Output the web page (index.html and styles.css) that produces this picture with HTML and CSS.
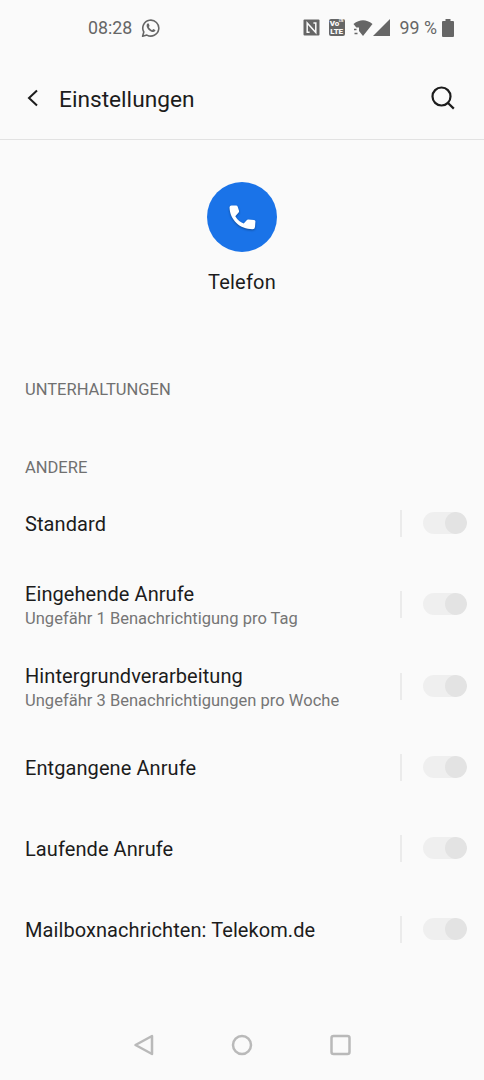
FILE: index.html
```html
<!DOCTYPE html>
<html lang="de">
  <head>
    <meta charset="UTF-8" />
    <meta name="viewport" content="width=device-width, initial-scale=1.0" />
    <title>Einstellungen</title>
    <link rel="stylesheet" href="styles.css">
  </head>
  <body>
    <div class="status-bar">
      <span class="time">08:28</span>
      <svg class="whatsapp" width="20" height="20" viewBox="0 0 20 20">
        <path d="M1.6 18.3l1.2-4.3a8 8 0 1 1 3.1 3.1z" fill="none" stroke="#666" stroke-width="1.6" stroke-linejoin="round" />
        <path d="M7.1 5.3c-.4 0-1.5.7-1.5 2.1 0 3 3.6 6.6 6.6 6.6 1.4 0 2.3-1 2.2-1.9l-2.2-1.1-1.1 1.2c-1.5-.6-2.6-1.7-3.3-3.1l.8-1-.8-2.4z" fill="#666" />
      </svg>
      <div class="status-right">
        <svg class="nfc" width="17" height="17" viewBox="0 0 17 17">
          <rect x="0.5" y="0.5" width="16" height="16" rx="1" fill="#666" />
          <path d="M6.6 13.2H4.2V4l8.600 9.500V4h-2.400" fill="none" stroke="#fafafa" stroke-width="1.5" />
        </svg>
        <div class="volte"><span>Vo<sup>LTE</sup></span><span>LTE</span></div>
        <svg class="wifi" width="20" height="18" viewBox="0 0 20 18">
          <path d="M0.5 5Q10-2.500 19.500 5L10 17 6 12V8.500H3.300z" fill="#666" />
          <path d="M1 10.500h2.500M1.500 14.500h3" stroke="#666" stroke-width="1.600" />
        </svg>
        <svg class="signal" width="17" height="17" viewBox="0 0 17 17">
          <path d="M0 17L17 0v17z" fill="#666" />
        </svg>
        <span class="percent">99 %</span>
        <svg class="battery" width="12" height="18" viewBox="0 0 12 18">
          <path d="M3.5 0h5v2H11a1 1 0 0 1 1 1v14a1 1 0 0 1-1 1H1a1 1 0 0 1-1-1V3a1 1 0 0 1 1-1h2.5z" fill="#666" />
        </svg>
      </div>
    </div>

    <header class="header">
      <svg class="back" width="12" height="18" viewBox="0 0 12 18">
        <path d="M10 1.5L2 9l8 7.5" fill="none" stroke="#1c1c1c" stroke-width="2" />
      </svg>
      <h1>Einstellungen</h1>
      <svg class="search" width="24" height="24" viewBox="0 0 24 24">
        <circle cx="10.5" cy="10.5" r="9" fill="none" stroke="#1c1c1c" stroke-width="2.2" />
        <path d="M17 17l5.8 5.6" stroke="#1c1c1c" stroke-width="2.2" />
      </svg>
    </header>

    <section class="app">
      <div class="app-icon">
        <svg width="28" height="28" viewBox="0 0 28 28">
          <path d="M1.5 3.5Q1.5 1.5 3.5 1.5H8Q9.3 1.5 9.7 2.7L11 6.7Q11.3 7.7 10.6 8.5L7.300 12.300Q10.300 17.500 15.700 19.600L18.700 16.200Q19.300 15.500 20.300 15.600L26 16Q27.500 16.100 27.400 17.500L27 23Q26.800 25.200 24.500 25.200C12 25.200 2 16 1.500 3.500z" fill="#fff" />
        </svg>
      </div>
      <div class="app-name">Telefon</div>
    </section>

    <main class="channels">
      <h2>UNTERHALTUNGEN</h2>
      <h2>ANDERE</h2>
      <div class="row">
        <div class="label">Standard</div>
        <div class="switch"></div>
      </div>
      <div class="row">
        <div class="label two-line">Eingehende Anrufe<small>Ungefähr 1 Benachrichtigung pro Tag</small></div>
        <div class="switch"></div>
      </div>
      <div class="row tall">
        <div class="label two-line">Hintergrundverarbeitung<small>Ungefähr 3 Benachrichtigungen pro Woche</small></div>
        <div class="switch"></div>
      </div>
      <div class="row">
        <div class="label">Entgangene Anrufe</div>
        <div class="switch"></div>
      </div>
      <div class="row">
        <div class="label">Laufende Anrufe</div>
        <div class="switch"></div>
      </div>
      <div class="row">
        <div class="label">Mailboxnachrichten: Telekom.de</div>
        <div class="switch"></div>
      </div>
    </main>

    <nav class="nav-bar">
      <svg width="22" height="22" viewBox="0 0 22 22">
        <path d="M20 2v18L3.5 11z" />
      </svg>
      <svg width="22" height="22" viewBox="0 0 22 22">
        <circle cx="11" cy="11" r="9" />
      </svg>
      <svg width="22" height="22" viewBox="0 0 22 22">
        <rect x="1.5" y="2" width="18" height="18" rx="2" />
      </svg>
    </nav>
  </body>
</html>
```

FILE: styles.css
```css
* {
  box-sizing: border-box;
}

body {
  margin: 0;
  height: 1080px;
  display: flex;
  flex-direction: column;
  background-color: #fafafa;
  color: #1c1c1c;
  font-family: Roboto, sans-serif;
  overflow: hidden;
}

svg {
  display: block;
  flex-shrink: 0;
}

/* Status bar */
.status-bar {
  height: 56px;
  padding: 0 30px 1px 88px;
  display: flex;
  align-items: center;
  color: #666;
  font-size: 17.8px;
}

.whatsapp {
  margin-left: 9px;
}

.status-right {
  margin-left: auto;
  display: flex;
  align-items: center;
}

.volte {
  width: 16px;
  height: 17px;
  margin: 0 8px 0 9px;
  padding-top: 1px;
  border-radius: 2px;
  background-color: #666;
  color: #fafafa;
  font-size: 8px;
  font-weight: 900;
  line-height: 7.5px;
  text-align: center;
  letter-spacing: -0.2px;
}

.volte span {
  display: block;
}

.volte sup {
  font-size: 3px;
  line-height: 0;
}

.signal {
  margin: 0 10px 0 0;
}

.battery {
  margin-left: 5px;
}

/* Header */
.header {
  height: 84px;
  padding: 1px 29px 0 27px;
  display: flex;
  align-items: center;
  border-bottom: 1px solid #e2e2e2;
}

.header h1 {
  flex: 1;
  margin: 3px 0 0 20px;
  font-size: 22.7px;
  font-weight: 400;
}

/* App */
.app {
  height: 221px;
  padding-top: 42px;
  display: flex;
  flex-direction: column;
  align-items: center;
}

.app-icon {
  width: 70px;
  height: 70px;
  display: flex;
  align-items: center;
  justify-content: center;
  border-radius: 50%;
  background-color: #1a73e8;
}

.app-icon svg {
  margin-top: 1px;
  filter: drop-shadow(0 1px 1px rgba(0, 0, 0, 0.35));
}

.app-name {
  margin-top: 17px;
  font-size: 20px;
  line-height: 26px;
  letter-spacing: 0.2px;
}

/* Notification channels */
.channels {
  flex: 1;
  padding: 0 17px 0 25px;
}

.channels h2 {
  height: 78px;
  margin: 0;
  padding-top: 19px;
  color: #707070;
  font-size: 16.5px;
  font-weight: 400;
  line-height: 20px;
}

.channels h2 + h2 {
  height: 44px;
}

.row {
  height: 81px;
  display: flex;
  align-items: center;
}

.row.tall {
  height: 82px;
}

.label {
  flex: 1;
  font-size: 20px;
  line-height: 26px;
  letter-spacing: 0.08px;
}

.label.two-line {
  padding-top: 2px;
}

.tall .label.two-line {
  padding-top: 3px;
}

.label small {
  display: block;
  color: #757575;
  font-size: 16.5px;
  line-height: 24px;
  letter-spacing: 0.02px;
}

.switch {
  width: 67px;
  height: 27px;
  padding: 2px 0 3px 21px;
  border-left: 2px solid #ebebeb;
}

.switch::before {
  content: "";
  display: block;
  width: 44px;
  height: 22px;
  border-radius: 11px;
  background: radial-gradient(circle at 33px 11px, #e3e3e3 10.5px, #efefef 11.5px);
}

/* Navigation bar */
.nav-bar {
  height: 72px;
  padding: 1px 132px 0;
  display: flex;
  align-items: center;
  justify-content: space-between;
}

.nav-bar svg {
  fill: none;
  stroke: #b9b9b9;
  stroke-width: 2.5;
  stroke-linejoin: round;
}
```
